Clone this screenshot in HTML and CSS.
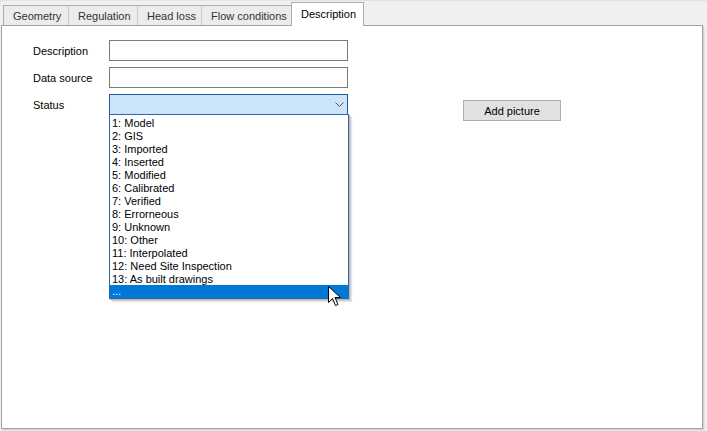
FILE: index.html
```html
<!DOCTYPE html>
<html>
<head>
<meta charset="utf-8">
<link rel="stylesheet" href="styles.css">
</head>
<body>
<div class="window">
  <div class="tabs">
    <div class="tab">Geometry</div>
    <div class="tab">Regulation</div>
    <div class="tab">Head loss</div>
    <div class="tab">Flow conditions</div>
    <div class="tab active">Description</div>
  </div>
  <div class="panel">
    <div class="form">
      <div class="fields">
        <label class="lbl">Description</label>
        <div class="input"></div>
        <label class="lbl">Data source</label>
        <div class="input"></div>
        <label class="lbl">Status</label>
        <div class="combo-wrap">
          <div class="combo">
            <svg class="chev" width="9" height="6" viewBox="0 0 9 6"><path d="M0.5 0.5 L4.5 4.5 L8.5 0.5" fill="none" stroke="#555" stroke-width="1"/></svg>
          </div>
          <ul class="list">
            <li>1: Model</li>
            <li>2: GIS</li>
            <li>3: Imported</li>
            <li>4: Inserted</li>
            <li>5: Modified</li>
            <li>6: Calibrated</li>
            <li>7: Verified</li>
            <li>8: Errorneous</li>
            <li>9: Unknown</li>
            <li>10: Other</li>
            <li>11: Interpolated</li>
            <li>12: Need Site Inspection</li>
            <li>13: As built drawings</li>
            <li class="sel">...</li>
          </ul>
          <svg class="cursor" width="14" height="21" viewBox="0 0 14 21"><path d="M0.5 0.5 L0.5 16.5 L4.5 12.5 L7.5 19.5 L10 18.5 L7 11.5 L12.5 11.5 Z" fill="#fff" stroke="#000" stroke-width="1" stroke-linejoin="miter"/></svg>
        </div>
      </div>
      <button class="btn">Add picture</button>
    </div>
  </div>
</div>
</body>
</html>
```

FILE: styles.css
```css
* { box-sizing: border-box; }
html, body { margin: 0; padding: 0; }
body {
  width: 707px;
  height: 431px;
  background: #f0f0f0;
  font-family: Tahoma, "Liberation Sans", Arial, sans-serif;
  font-size: 11px;
  color: #000;
  overflow: hidden;
}
.window {
  border-top: 1px solid #e3e3e3;
  padding-top: 1px;
}
.tabs {
  display: flex;
  align-items: flex-end;
  margin-left: 3px;
  height: 23px;
  position: relative;
  z-index: 2;
}
.tab {
  height: 20px;
  padding: 1px 0 0 9px;
  border: 1px solid #adadad;
  border-bottom: none;
  border-left-color: #c9c9c9;
  background: #ececec;
  color: #333;
  display: flex;
  align-items: center;
  margin-right: -1px;
  line-height: 1;
  white-space: nowrap;
}
.tab:first-child { border-left-color: #adadad; }
.tab:nth-child(1) { width: 66px; }
.tab:nth-child(2) { width: 70px; }
.tab:nth-child(3) { width: 65px; }
.tab:nth-child(4) { width: 91px; }
.tab.active {
  height: 24px;
  width: 73px;
  background: #fff;
  color: #000;
  border-color: #adadad;
  margin-bottom: -1px;
  padding: 0 0 1px 9px;
}
.panel {
  margin: 0 4px 0 1px;
  height: 404px;
  background: #fff;
  border: 1px solid #a0a0ab;
  box-shadow: 1px 1px 0 #d4d4d4, 2px 2px 0 #e4e4e4;
  position: relative;
  z-index: 1;
}
.form {
  display: flex;
  align-items: flex-start;
  padding: 14px 0 0 31px;
}
.fields {
  display: grid;
  grid-template-columns: 76px 239px;
  grid-auto-rows: 21px;
  row-gap: 6px;
}
.lbl {
  display: flex;
  align-items: center;
  height: 21px;
  padding-top: 1px;
}
.input {
  border: 1px solid #7a7a7a;
  background: #fff;
}
.combo-wrap { position: relative; }
.combo {
  height: 21px;
  background: #cce4f7;
  border: 1px solid #1c5aa6;
  position: relative;
}
.chev {
  position: absolute;
  right: 3px;
  top: 7px;
}
.list {
  position: absolute;
  left: 0;
  top: 20px;
  width: 240px;
  margin: 0;
  padding: 1px 0 0 0;
  list-style: none;
  background: #fff;
  border: 1px solid #2e66ad;
  box-shadow: 1px 1px 0 #b8b8b8, 2px 2px 0 #d0d0d0, 3px 3px 1px #e6e6e6;
  z-index: 5;
}
.list li {
  height: 13px;
  line-height: 14px;
  padding-left: 2px;
  white-space: nowrap;
}
.list li.sel {
  background: #0078d7;
  color: #fff;
  height: 13px;
  line-height: 12px;
}
.cursor {
  position: absolute;
  left: 219px;
  top: 192px;
  z-index: 6;
}
.btn {
  margin: 60px 0 0 115px;
  width: 98px;
  height: 21px;
  background: #e1e1e1;
  border: 1px solid #adadad;
  font-family: inherit;
  font-size: 11px;
  color: #000;
  padding: 0;
}
```
